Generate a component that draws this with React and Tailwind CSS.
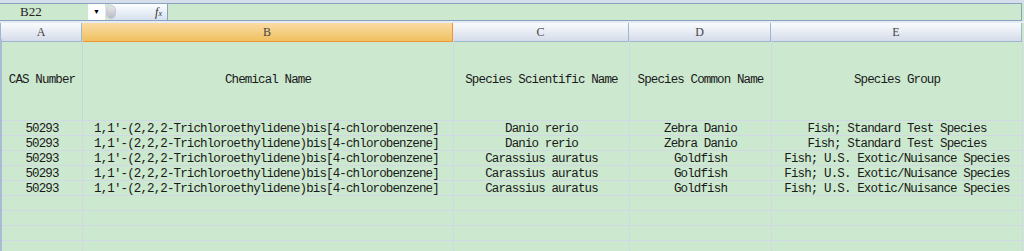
import React from "react";

const cols = ["A", "B", "C", "D", "E"];
const widths = "grid-cols-[81px_371px_176px_142px_251px]";

const rows = [
  ["50293", "1,1'-(2,2,2-Trichloroethylidene)bis[4-chlorobenzene]", "Danio rerio", "Zebra Danio", "Fish; Standard Test Species"],
  ["50293", "1,1'-(2,2,2-Trichloroethylidene)bis[4-chlorobenzene]", "Danio rerio", "Zebra Danio", "Fish; Standard Test Species"],
  ["50293", "1,1'-(2,2,2-Trichloroethylidene)bis[4-chlorobenzene]", "Carassius auratus", "Goldfish", "Fish; U.S. Exotic/Nuisance Species"],
  ["50293", "1,1'-(2,2,2-Trichloroethylidene)bis[4-chlorobenzene]", "Carassius auratus", "Goldfish", "Fish; U.S. Exotic/Nuisance Species"],
  ["50293", "1,1'-(2,2,2-Trichloroethylidene)bis[4-chlorobenzene]", "Carassius auratus", "Goldfish", "Fish; U.S. Exotic/Nuisance Species"],
];

const headers = ["CAS Number", "Chemical Name", "Species Scientific Name", "Species Common Name", "Species Group"];

const mono = "font-['Liberation_Mono',monospace] text-[12.5px] tracking-[-0.87px] text-[#1a1a1a]";

export default function App() {
  return (
    <div className="w-[1024px] h-[251px] overflow-hidden bg-[#cce8cf] flex flex-col">
      {/* top strip + formula bar */}
      <div className="h-[3px] shrink-0 bg-[#d5dfeb]" />
      <div className="h-[18px] shrink-0 flex border-y border-[#8aa2c0] bg-[#cce8cf] mr-[2px]">
        <div className="w-[88px] flex items-center pl-[20px] font-['Liberation_Serif',serif] text-[13px] text-[#222]">
          B22
        </div>
        <div className="w-[17px] bg-white flex items-center justify-center text-[7px] text-black">▼</div>
        <div className="w-[63px] flex items-center bg-gradient-to-b from-[#fdfeff] to-[#d6e1ef] rounded-l-full border-r border-[#8aa2c0]">
          <div className="w-[10px] h-[14px] ml-[1px] rounded-full bg-gradient-to-b from-[#e8e8e8] to-[#b8bcc4] border border-[#c3cad6]" />
          <span className="ml-auto mr-[5px] font-['Liberation_Serif',serif] italic text-[12px] text-[#333]">
            f<span className="text-[8px]">x</span>
          </span>
        </div>
        <div className="flex-1 border-r border-[#8aa2c0]" />
      </div>
      <div className="h-[2px] shrink-0 bg-[#e4ebf3]" />

      {/* column header */}
      <div className={`grid ${widths} h-[16px] shrink-0 border-l border-[#9eb6ce]`}>
        {cols.map((c) =>
          c === "B" ? (
            <div
              key={c}
              className="flex items-center justify-center bg-gradient-to-b from-[#f9dba3] to-[#f1c15f] border-r border-b border-[#f29436] font-['Liberation_Serif',serif] text-[12px] text-[#444]"
            >
              {c}
            </div>
          ) : (
            <div
              key={c}
              className="flex items-center justify-center bg-gradient-to-b from-[#f9fbfd] to-[#d5dce9] border-r border-b border-[#9eb6ce] font-['Liberation_Serif',serif] text-[12px] text-[#444]"
            >
              {c}
            </div>
          )
        )}
      </div>

      {/* sheet body */}
      <div className={`grid ${widths} shrink-0 border-l-2 border-[#a9bcd4] ${mono}`}>
        {headers.map((h, i) => (
          <div
            key={h}
            className={`h-[82px] flex items-center justify-center pt-[2px] border-b border-[#d0d7e5] ${i === 0 ? "border-r border-r-[#c7d3e0]" : "border-r"}`}
          >
            {h}
          </div>
        ))}
        {rows.map((r, ri) =>
          r.map((v, ci) => (
            <div
              key={`${ri}-${ci}`}
              className={`h-[15px] flex items-end border-b border-r border-[#d0d7e5] leading-none ${
                ci === 1 ? "pl-[11px]" : "justify-center"
              }`}
            >
              {v}
            </div>
          ))
        )}
        {[0, 1, 2, 3].map((ri) =>
          cols.map((c) => (
            <div key={`e${ri}${c}`} className="h-[15px] border-b border-r border-[#d0d7e5]" />
          ))
        )}
      </div>
    </div>
  );
}
